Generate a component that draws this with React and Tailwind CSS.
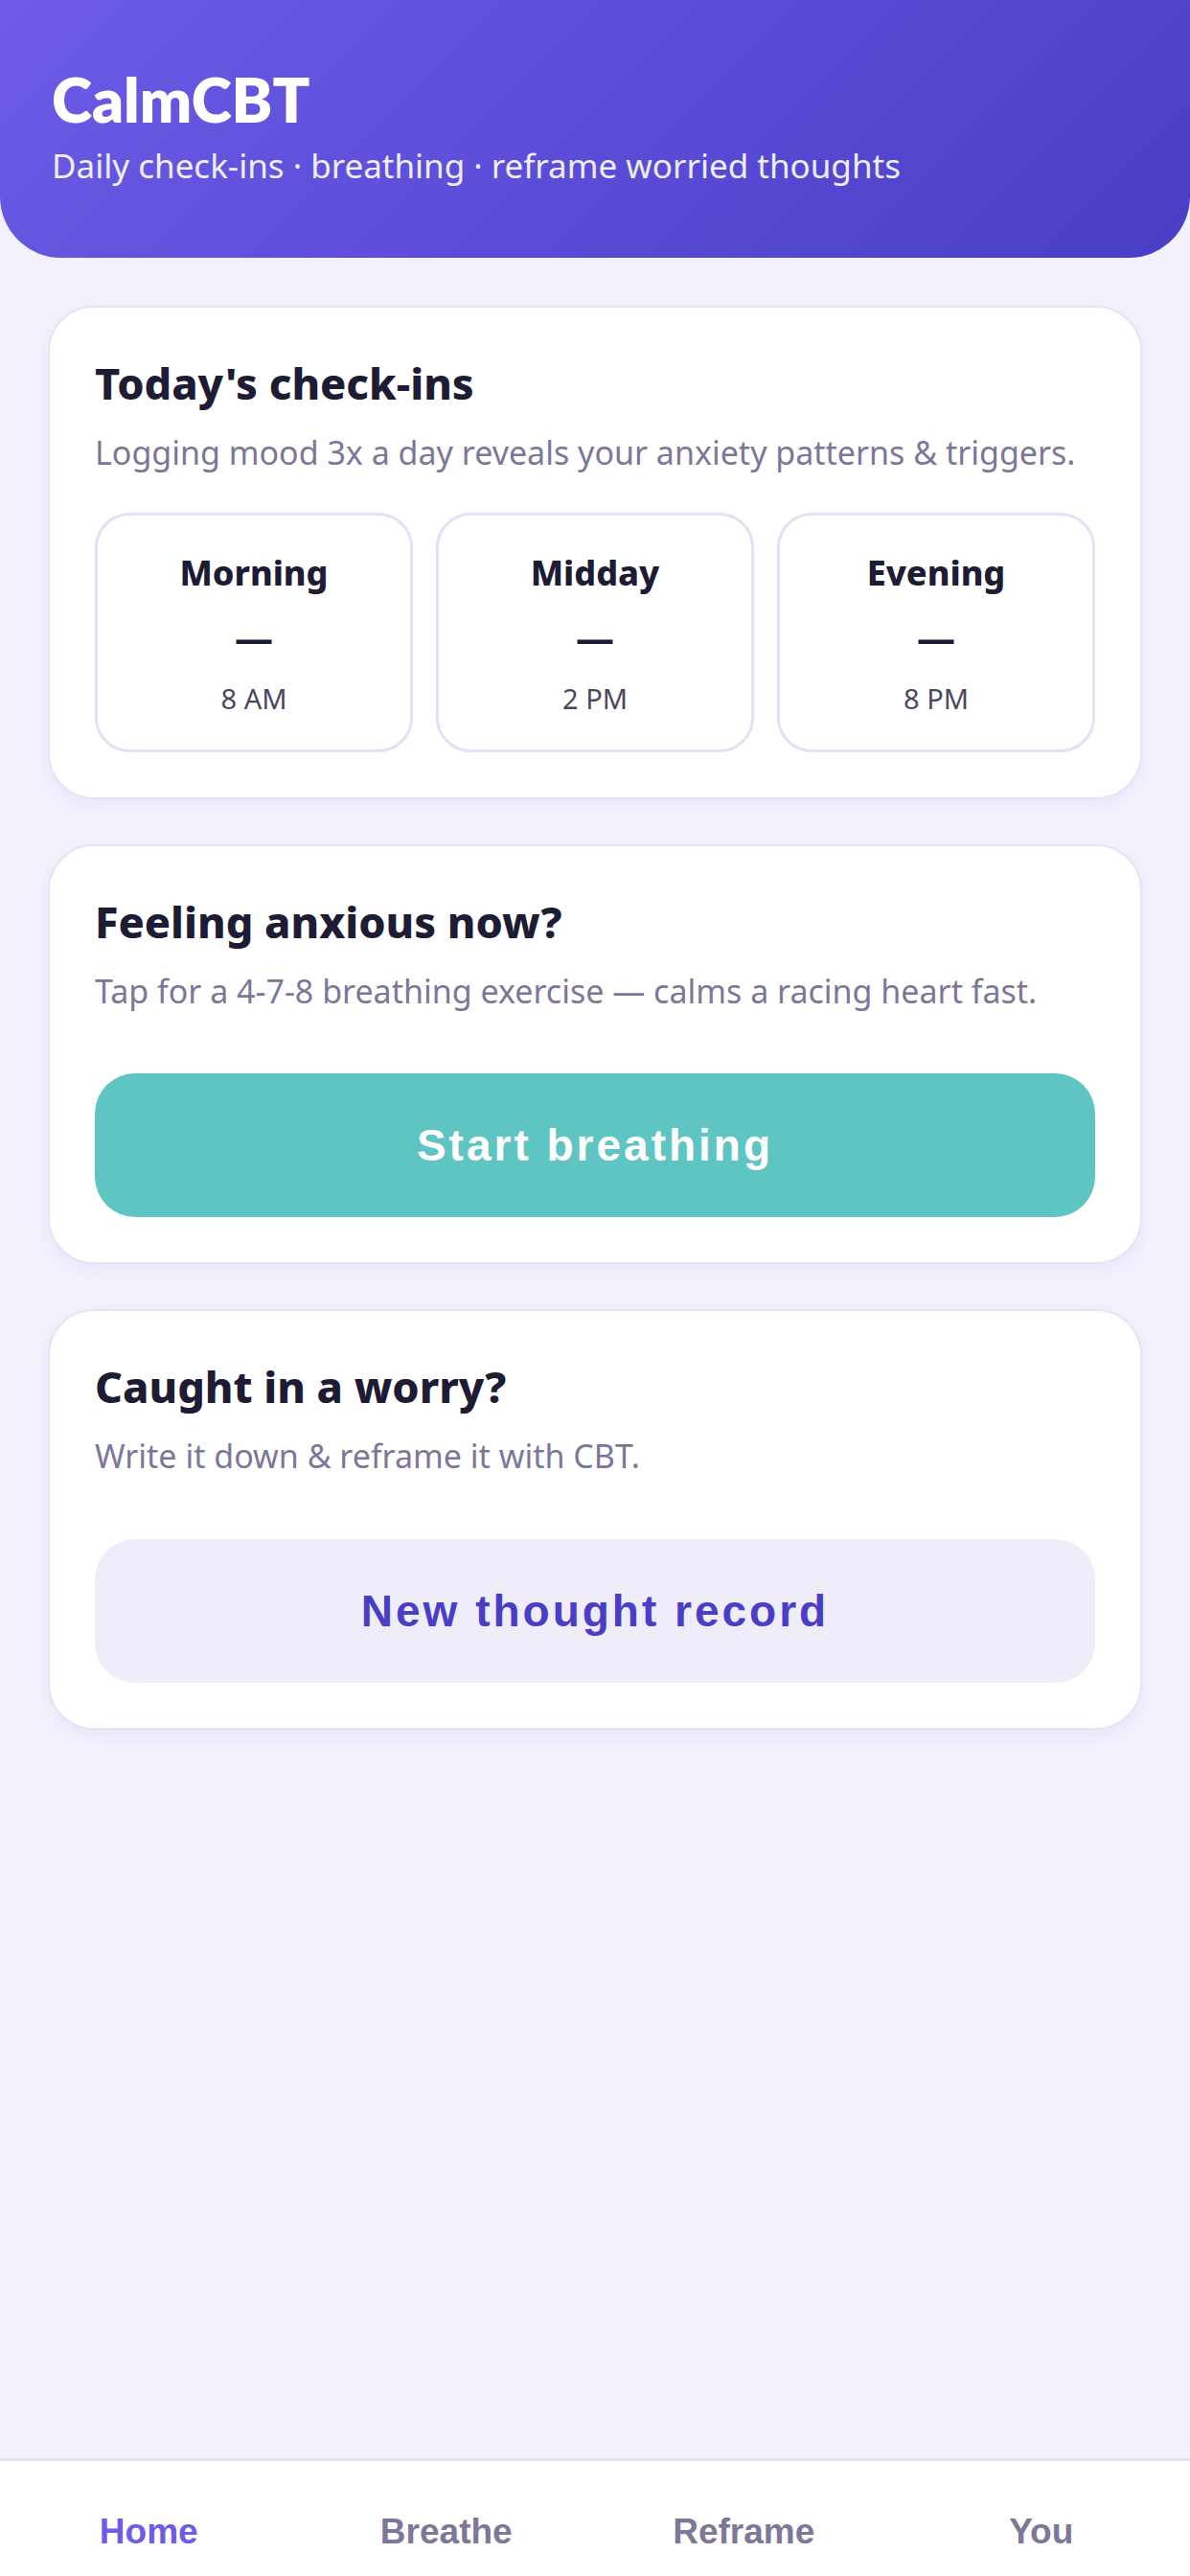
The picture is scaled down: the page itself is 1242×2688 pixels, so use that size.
import React from 'react';

const checkins = [
  { label: 'Morning', time: '8 AM' },
  { label: 'Midday', time: '2 PM' },
  { label: 'Evening', time: '8 PM' },
];

const tabs = ['Home', 'Breathe', 'Reframe', 'You'];

const Card = ({ title, text, children }) => (
  <div className="bg-white rounded-[48px] border-2 border-[#e6e3f6] shadow-[0_6px_16px_rgba(90,70,200,0.06)] pt-[52px] px-[47px] pb-[47px]">
    <h2 className="text-[45px] leading-[1.2] font-extrabold text-[#1e1b34]">{title}</h2>
    <p className="mt-[25px] text-[34px] leading-[1.2] text-[#7c7799]">{text}</p>
    {children}
  </div>
);

const App = () => {
  return (
    <div className="min-h-screen flex flex-col bg-[#f3f1fc] font-['Noto_Sans','Lato',sans-serif]">
      <header className="bg-linear-135 from-[#6c5ce7] to-[#4a3dc6] rounded-b-[64px] pt-[66px] pb-[75px] px-[54px]">
        <h1 className="text-[64px] leading-[1.2] font-extrabold text-white font-['Lato',sans-serif]">CalmCBT</h1>
        <p className="mt-[9px] text-[35px] leading-[1.2] text-white/90">
          Daily check-ins · breathing · reframe worried thoughts
        </p>
      </header>

      <main className="flex-1 flex flex-col gap-[47px] px-[50px] pt-[50px]">
        <Card title="Today's check-ins" text="Logging mood 3x a day reveals your anxiety patterns & triggers.">
          <div className="mt-[42px] grid grid-cols-3 gap-[24px]">
            {checkins.map((c) => (
              <div
                key={c.label}
                className="h-[250px] rounded-[36px] border-[3px] border-[#e4e1f5] flex flex-col items-center pt-[38px]"
              >
                <div className="text-[36px] leading-[1.2] font-extrabold text-[#1e1b34]">{c.label}</div>
                <div className="mt-[22px] text-[40px] leading-[1.2] font-bold text-[#1e1b34]">—</div>
                <div className="mt-[23px] text-[29px] leading-[1.2] text-[#4b4662]">{c.time}</div>
              </div>
            ))}
          </div>
        </Card>

        <Card title="Feeling anxious now?" text="Tap for a 4-7-8 breathing exercise — calms a racing heart fast.">
          <button className="mt-[66px] w-full h-[150px] rounded-[42px] bg-[#5fc5c3] text-white text-[46px] tracking-[3px] font-bold font-['Liberation_Sans',Arial,sans-serif]">
            Start breathing
          </button>
        </Card>

        <Card title="Caught in a worry?" text="Write it down & reframe it with CBT.">
          <button className="mt-[66px] w-full h-[150px] rounded-[42px] bg-[#efedfa] text-[#4a3ec6] text-[46px] tracking-[3px] font-bold font-['Liberation_Sans',Arial,sans-serif]">
            New thought record
          </button>
        </Card>
      </main>

      <nav className="h-[123px] border-t-[3px] border-[#e5e2f3] bg-white grid grid-cols-4 pt-[55px] font-['Liberation_Sans',Arial,sans-serif]">
        {tabs.map((t, i) => (
          <div
            key={t}
            className={`text-center text-[37px] leading-none font-bold ${i === 0 ? 'text-[#6c5ce7]' : 'text-[#7d7898]'}`}
          >
            {t}
          </div>
        ))}
      </nav>
    </div>
  );
};

export default App;
